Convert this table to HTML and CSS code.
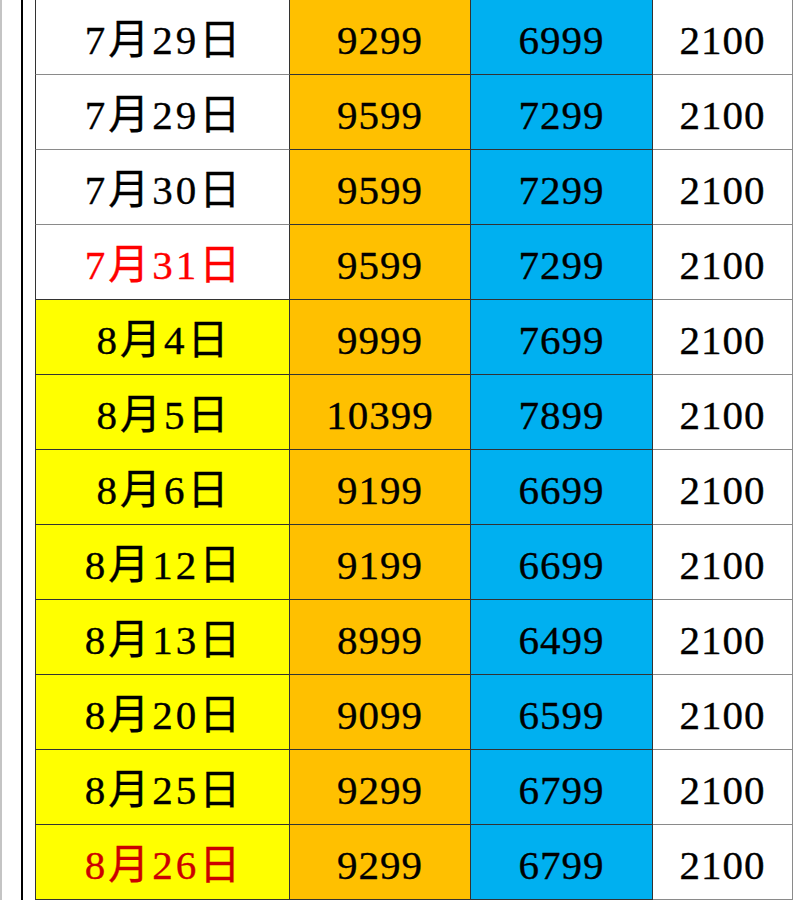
FILE: index.html
```html
<!DOCTYPE html>
<html lang="ja">
<head>
<meta charset="utf-8">
<title>価格表</title>
<link rel="stylesheet" href="styles.css">
</head>
<body>
<div class="page">
  <div class="edge"></div>
  <div class="rule"></div>
  <table class="prices">
    <tbody>
      <tr><td class="date">7月29日</td><td class="a">9299</td><td class="b">6999</td><td class="c">2100</td></tr>
      <tr><td class="date">7月29日</td><td class="a">9599</td><td class="b">7299</td><td class="c">2100</td></tr>
      <tr><td class="date">7月30日</td><td class="a">9599</td><td class="b">7299</td><td class="c">2100</td></tr>
      <tr><td class="date red last-white">7月31日</td><td class="a">9599</td><td class="b">7299</td><td class="c">2100</td></tr>
      <tr><td class="date hl">8月4日</td><td class="a">9999</td><td class="b">7699</td><td class="c">2100</td></tr>
      <tr><td class="date hl">8月5日</td><td class="a">10399</td><td class="b">7899</td><td class="c">2100</td></tr>
      <tr><td class="date hl">8月6日</td><td class="a">9199</td><td class="b">6699</td><td class="c">2100</td></tr>
      <tr><td class="date hl">8月12日</td><td class="a">9199</td><td class="b">6699</td><td class="c">2100</td></tr>
      <tr><td class="date hl">8月13日</td><td class="a">8999</td><td class="b">6499</td><td class="c">2100</td></tr>
      <tr><td class="date hl">8月20日</td><td class="a">9099</td><td class="b">6599</td><td class="c">2100</td></tr>
      <tr><td class="date hl">8月25日</td><td class="a">9299</td><td class="b">6799</td><td class="c">2100</td></tr>
      <tr><td class="date hl dark-red">8月26日</td><td class="a">9299</td><td class="b">6799</td><td class="c">2100</td></tr>
    </tbody>
  </table>
</div>
</body>
</html>
```
FILE: styles.css
```css
html, body {
  margin: 0;
  padding: 0;
  background: #ffffff;
}

.page {
  display: flex;
  align-items: flex-start;
  height: 900px;
  overflow: hidden;
}

.edge {
  flex: none;
  width: 2px;
  height: 900px;
  background: #c4c4c4;
  margin-right: 19px;
}

.rule {
  flex: none;
  width: 2px;
  height: 900px;
  background: #000000;
  margin-right: 12px;
}

.prices {
  flex: none;
  border-collapse: separate;
  border-spacing: 0;
  table-layout: fixed;
  font-family: "Liberation Serif", "Noto Sans CJK JP", serif;
  font-size: 41px;
  color: #000000;
  -webkit-text-stroke: 0.35px currentColor;
}

.prices td {
  height: 75px;
  padding: 7px 0 0 0;
  box-sizing: border-box;
  text-align: center;
  vertical-align: middle;
  line-height: 1;
  border-right: 1px solid #333333;
  border-bottom: 1px solid #333333;
  letter-spacing: 1px;
  white-space: nowrap;
}

.prices td.date {
  width: 255px;
  border-left: 1px solid #333333;
  background: #ffffff;
  border-bottom-color: #8a8a8a;
  letter-spacing: 3px;
  padding-left: 3px;
}

.prices td.date.last-white {
  border-bottom-color: #333333;
}

.prices td.date.hl {
  background: #ffff00;
  border-bottom-color: #333333;
}

.prices td.red {
  color: #ff0000;
}

.prices td.dark-red {
  color: #cc0000;
}

.prices td.a {
  width: 181px;
  background: #ffc000;
}

.prices td.b {
  width: 182px;
  background: #00b0f0;
}

.prices td.c {
  width: 140px;
  background: #ffffff;
  border-right-color: #8a8a8a;
  border-bottom-color: #8a8a8a;
}
```
